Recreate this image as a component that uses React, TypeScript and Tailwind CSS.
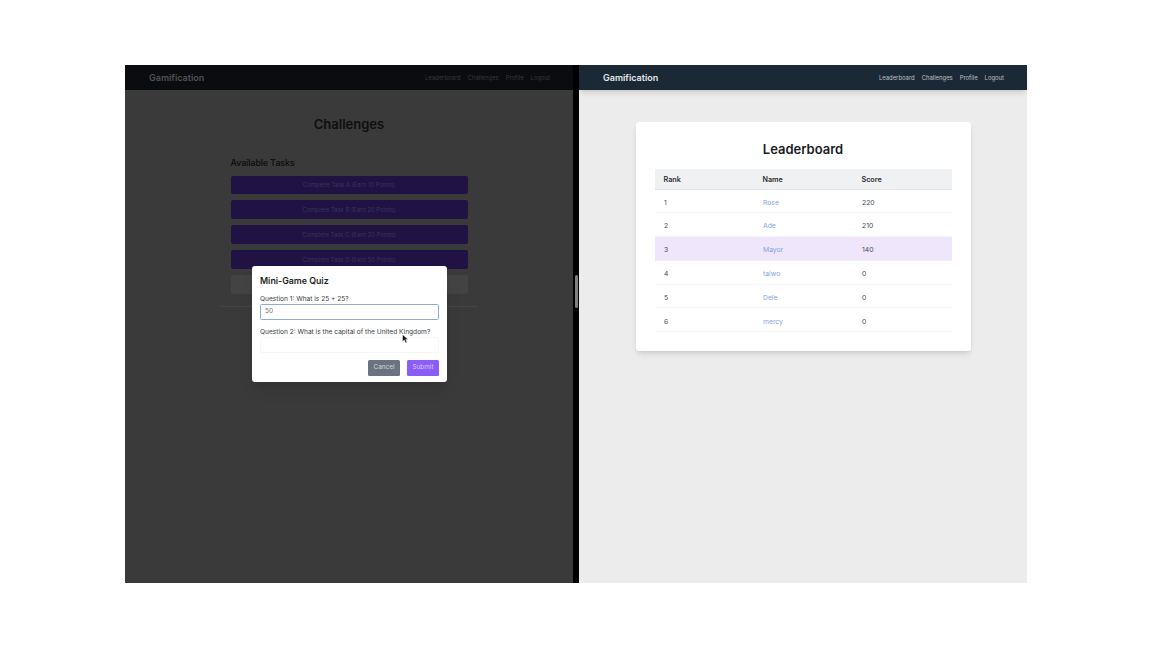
const font = { fontFamily: "Inter, 'Liberation Sans', sans-serif" };

function Nav({ dark }: { dark?: boolean }) {
  return (
    <nav className={`h-[25px] shrink-0 flex items-center justify-between pl-[24px] pr-[23px] pt-[1px] ${dark ? "bg-[#0a0c0f]" : "bg-[#1b2936] shadow-md"}`}>
      <span className={`text-[9px] leading-[12px] font-semibold ${dark ? "text-[#4f5255]" : "text-[#e4e7ea]"}`}>Gamification</span>
      <div className={`flex gap-[7px] text-[5.9px] leading-[12px] ${dark ? "text-[#36393c]" : "text-[#bcc1c6]"}`}>
        <span>Leaderboard</span>
        <span>Challenges</span>
        <span>Profile</span>
        <span>Logout</span>
      </div>
    </nav>
  );
}

const tasks = [
  "Complete Task A (Earn 10 Points)",
  "Complete Task B (Earn 20 Points)",
  "Complete Task C (Earn 30 Points)",
  "Complete Task D (Earn 50 Points)",
];

const rows = [
  ["1", "Rose", "220"],
  ["2", "Ade", "210"],
  ["3", "Mayor", "140"],
  ["4", "taiwo", "0"],
  ["5", "Dele", "0"],
  ["6", "mercy", "0"],
];

function Modal() {
  return (
    <div className="absolute left-[127px] top-[201px] w-[195px] h-[116px] bg-white rounded-[3px] shadow-lg px-[8px] pt-[8px] text-[#3a3c40]">
      <h3 className="text-[8.8px] font-semibold leading-[14px] text-[#1d1f22]">Mini-Game Quiz</h3>
      <p className="text-[6.6px] leading-[9px] mt-[6.5px]">Question 1: What is 25 + 25?</p>
      <div className="h-[16px] w-full border border-[#8fa9d8] rounded-[1.5px] flex items-center px-[4px] text-[6.4px] text-[#6a6c70]">50</div>
      <p className="text-[6.6px] leading-[9px] mt-[8.5px]">Question 2: What is the capital of the United Kingdom?</p>
      <div className="h-[16px] w-full border border-[#f7f7f8] rounded-[1.5px]" />
      <div className="flex justify-end gap-[7px] mt-[6.5px]">
        <button className="w-[32px] h-[16px] pt-px bg-[#6b7280] text-[#d5d7da] text-[6.4px] rounded-[1.5px]">Cancel</button>
        <button className="w-[32px] h-[16px] pt-px bg-[#8b5cf6] text-[#d9c9f9] text-[6.4px] rounded-[1.5px]">Submit</button>
      </div>
      <svg className="absolute left-[150px] top-[68px]" width="7" height="10" viewBox="0 0 7 10">
        <path d="M0.5 0.5 L0.5 7.5 L2.3 6 L3.6 9 L5 8.4 L3.7 5.5 L6 5.3 Z" fill="#111" stroke="#fff" strokeWidth="0.5" />
      </svg>
    </div>
  );
}

function LeftPane() {
  return (
    <div className="relative w-[448px] shrink-0 bg-[#3a3a3a] flex flex-col">
      <Nav dark />
      <div className="flex flex-col items-center">
        <h1 className="text-[13px] font-semibold leading-[20px] text-[#0e0f10] mt-[24px]">Challenges</h1>
        <div className="w-[237px] mt-[21px]">
          <h2 className="text-[8.6px] font-semibold leading-[14px] text-[#0e0f10] pt-[0.5px]">Available Tasks</h2>
          <div className="flex flex-col gap-[6.3px] mt-[6px]">
            {tasks.map((t) => (
              <div key={t} className="h-[18.7px] pt-px bg-[#201243] rounded-[2px] flex items-center justify-center text-[5.9px] text-[#3d3456]">
                {t}
              </div>
            ))}
            <div className="h-[18.7px] bg-[#434343] rounded-[2px]" />
          </div>
        </div>
        <div className="w-[258px] h-px bg-[#444444] mt-[12px]" />
      </div>
      <Modal />
    </div>
  );
}

function RightPane() {
  return (
    <div className="w-[448px] shrink-0 bg-[#ececec] flex flex-col">
      <Nav />
      <div className="flex justify-center pt-[32px]">
        <div className="w-[335px] h-[229px] bg-white rounded-[3px] shadow-md px-[19px] pt-[17px]">
          <h1 className="text-[13px] font-semibold leading-[20px] text-center text-[#1b1c1e]">Leaderboard</h1>
          <div className="mt-[10px] text-[6.8px] text-[#4a4c50]">
            <div className="grid grid-cols-[99px_99px_1fr] h-[20.5px] pt-[4px] items-center px-[9px] bg-[#f0f1f3] border-b border-[#dfe1e4] font-semibold text-[#2a2c30] text-[7.2px]">
              <span>Rank</span>
              <span>Name</span>
              <span>Score</span>
            </div>
            {rows.map(([r, n, s]) => (
              <div
                key={r}
                className={`grid grid-cols-[99px_99px_1fr] h-[23.8px] pt-[3.5px] items-center pl-[9.5px] pr-[9px] border-b ${r === "3" ? "bg-[#efe6fc] border-[#efe6fc]" : "border-[#f6f6f7]"}`}
              >
                <span>{r}</span>
                <span className="text-[#86a4dc]">{n}</span>
                <span>{s}</span>
              </div>
            ))}
          </div>
        </div>
      </div>
    </div>
  );
}

export default function App() {
  return (
    <div className="w-[1152px] h-[648px] bg-white overflow-hidden pt-[65px] pl-[125px]" style={font}>
      <div className="flex h-[518px] w-[902px]">
        <LeftPane />
        <div className="w-[6px] shrink-0 bg-black flex items-center justify-center">
          <div className="w-[3px] h-[33px] mb-[65px] rounded-full bg-[#7e7e7e]" />
        </div>
        <RightPane />
      </div>
    </div>
  );
}
